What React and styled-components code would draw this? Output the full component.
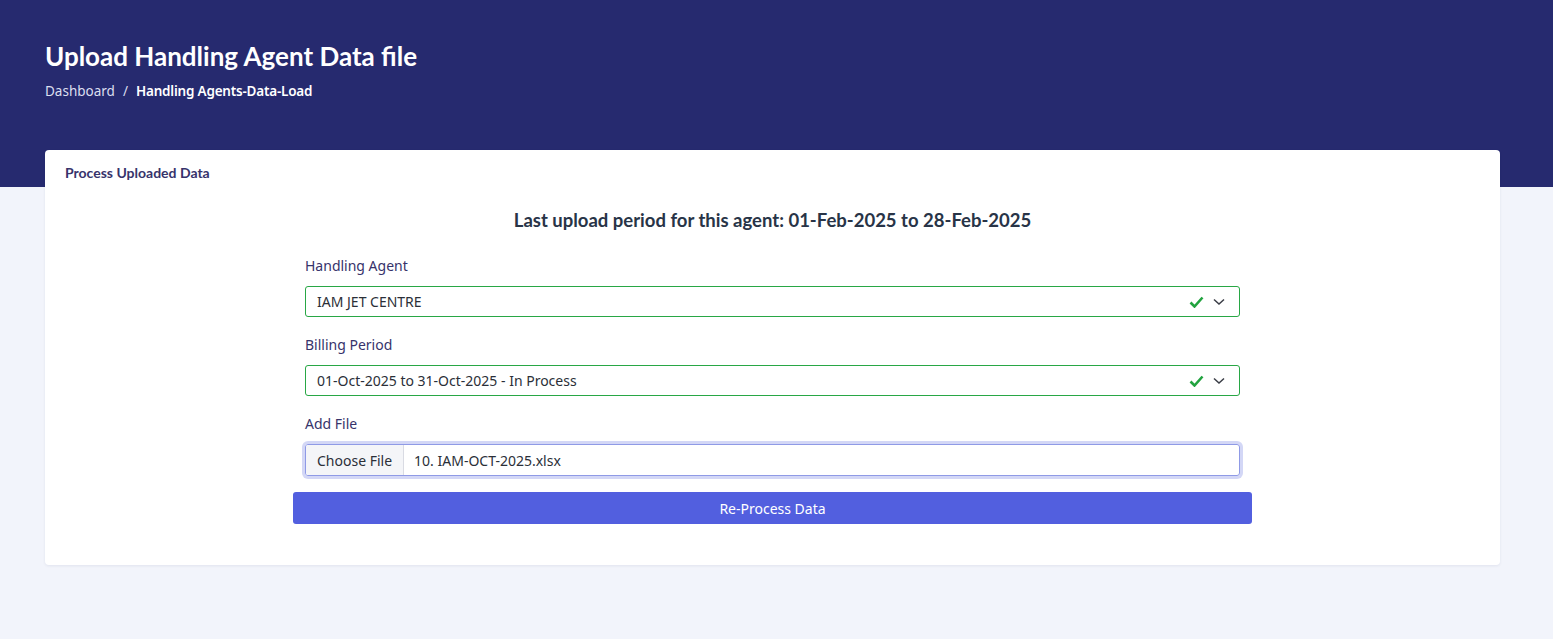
import React from 'react';
import styled, { createGlobalStyle } from 'styled-components';

const GlobalStyle = createGlobalStyle`
  body {
    margin: 0;
    background: #f2f4fb;
    font-family: "Noto Sans", "Open Sans", sans-serif;
  }
`;

const Page = styled.div`
  min-height: 639px;
  background: #f2f4fb;
`;

const Banner = styled.header`
  background: #262a6f;
  height: 187px;
  padding: 40px 45px 0;
  box-sizing: border-box;
`;

const PageTitle = styled.h1`
  margin: 0;
  font-family: "Lato", "Open Sans", sans-serif;
  font-weight: 700;
  font-size: 26px;
  line-height: 32px;
  color: #ffffff;
`;

const Crumbs = styled.nav`
  display: flex;
  align-items: center;
  gap: 8px;
  margin-top: 10px;
  font-size: 13.5px;
  color: #dcdff0;
`;

const Crumb = styled.span`
  font-weight: ${p => (p.active ? 600 : 400)};
  color: ${p => (p.active ? '#ffffff' : '#dcdff0')};
  letter-spacing: ${p => (p.active ? '-0.2px' : '0')};
`;

const Body = styled.main`
  padding: 0 53px 0 45px;
  margin-top: -37px;
`;

const Card = styled.section`
  background: #ffffff;
  border-radius: 4px;
  box-shadow: 0 1px 3px rgba(30, 40, 90, 0.08);
  padding-bottom: 41px;
`;

const CardHeader = styled.div`
  padding: 14px 20px 0;
  font-family: "Lato", "Open Sans", sans-serif;
  font-weight: 700;
  font-size: 14px;
  color: #37336b;
`;

const CardBody = styled.div`
  padding: 0 20px;
  display: flex;
  flex-direction: column;
  align-items: center;
`;

const PeriodTitle = styled.h2`
  margin: 28px 0 25px;
  font-family: "Lato", "Open Sans", sans-serif;
  font-weight: 700;
  font-size: 18.5px;
  color: #283447;
`;

const Form = styled.form`
  width: 959px;
  display: flex;
  flex-direction: column;
`;

const Field = styled.div`
  padding: 0 12px;
  margin-bottom: 18px;
`;

const Label = styled.label`
  display: block;
  font-size: 14px;
  color: #37336b;
  margin-bottom: 11px;
`;

const SelectBox = styled.div`
  display: flex;
  align-items: center;
  height: 31px;
  box-sizing: border-box;
  border: 1px solid #28a745;
  border-radius: 3px;
  padding: 0 14px 0 11px;
  font-size: 14px;
  color: #2b2f38;
`;

const SelectValue = styled.span`
  flex: 1;
`;

const Icons = styled.span`
  display: flex;
  align-items: center;
  gap: 9px;
`;

const FileBox = styled.div`
  display: flex;
  height: 32px;
  box-sizing: border-box;
  border: 1px solid #8f9ae6;
  border-radius: 3px;
  box-shadow: 0 0 0 3px #d3d7f6;
  overflow: hidden;
  font-size: 14px;
  color: #2b2f38;
`;

const ChooseButton = styled.span`
  display: flex;
  align-items: center;
  padding: 0 11px;
  background: #f4f5f8;
  border-right: 1px solid #d9dbe3;
`;

const FileName = styled.span`
  display: flex;
  align-items: center;
  padding: 0 10px;
`;

const SubmitButton = styled.button`
  margin-top: -2px;
  height: 32px;
  border: none;
  border-radius: 3px;
  background: #525fdf;
  color: #ffffff;
  font-family: "Noto Sans", "Open Sans", sans-serif;
  font-size: 14px;
  cursor: pointer;
`;

const Check = () => (
  <svg width="15" height="12" viewBox="0 0 15 12">
    <path d="M1.5 6.5 L5.5 10.5 L13.5 1.5" fill="none" stroke="#22a33f" strokeWidth="2.6" strokeLinejoin="miter" />
  </svg>
);

const Chevron = () => (
  <svg width="12" height="8" viewBox="0 0 12 8">
    <path d="M1 1.5 L6 6 L11 1.5" fill="none" stroke="#3a3d46" strokeWidth="1.5" />
  </svg>
);

const Select = ({ value }) => (
  <SelectBox>
    <SelectValue>{value}</SelectValue>
    <Icons>
      <Check />
      <Chevron />
    </Icons>
  </SelectBox>
);

export default function App() {
  return (
    <Page>
      <GlobalStyle />
      <Banner>
        <PageTitle>Upload Handling Agent Data file</PageTitle>
        <Crumbs>
          <Crumb>Dashboard</Crumb>
          <Crumb>/</Crumb>
          <Crumb active>Handling Agents-Data-Load</Crumb>
        </Crumbs>
      </Banner>
      <Body>
        <Card>
          <CardHeader>Process Uploaded Data</CardHeader>
          <CardBody>
            <PeriodTitle>Last upload period for this agent: 01-Feb-2025 to 28-Feb-2025</PeriodTitle>
            <Form onSubmit={e => e.preventDefault()}>
              <Field>
                <Label>Handling Agent</Label>
                <Select value="IAM JET CENTRE" />
              </Field>
              <Field>
                <Label>Billing Period</Label>
                <Select value="01-Oct-2025 to 31-Oct-2025 - In Process" />
              </Field>
              <Field>
                <Label>Add File</Label>
                <FileBox>
                  <ChooseButton>Choose File</ChooseButton>
                  <FileName>10. IAM-OCT-2025.xlsx</FileName>
                </FileBox>
              </Field>
              <SubmitButton type="submit">Re-Process Data</SubmitButton>
            </Form>
          </CardBody>
        </Card>
      </Body>
    </Page>
  );
}
